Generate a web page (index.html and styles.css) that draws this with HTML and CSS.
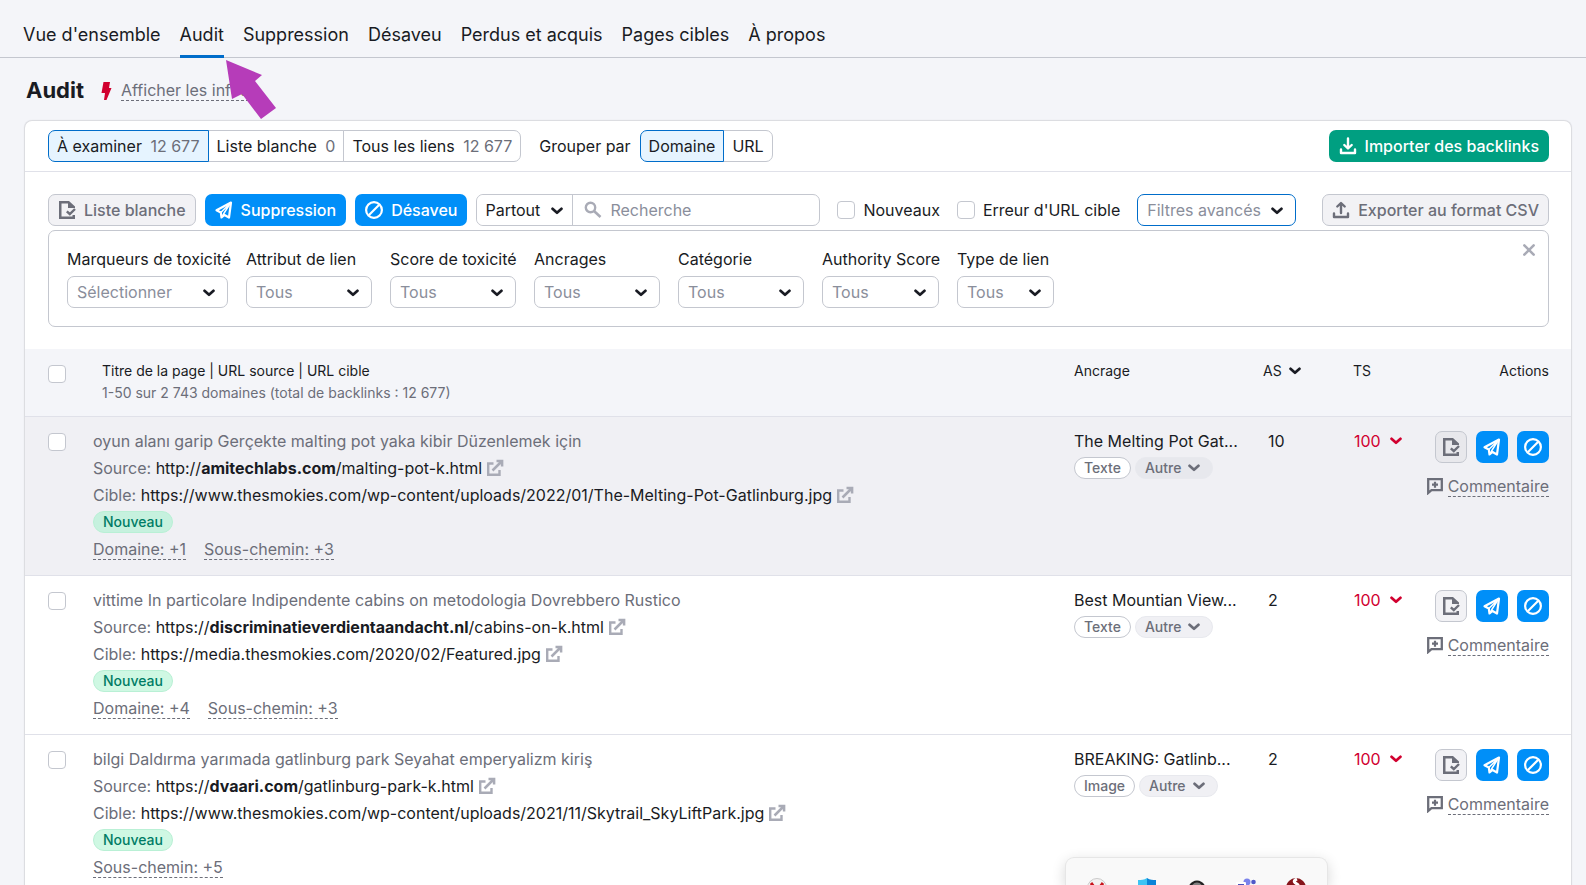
FILE: index.html
```html
<!DOCTYPE html>
<html lang="fr">
<head>
<meta charset="utf-8">
<title>Audit de backlinks</title>
<link rel="stylesheet" href="styles.css">
</head>
<body>
<svg class="sprite" aria-hidden="true">
  <symbol id="i-chevron" viewBox="0 0 12 8"><path d="M1.500 1.800 6 5.800l4.500-4" fill="none" stroke="currentColor" stroke-width="2.700" stroke-linecap="round" stroke-linejoin="round"/></symbol>
  <symbol id="i-page" viewBox="0 0 18 18"><path d="M11 0H1v18h16v-4h-2.500v1.500h-11v-13H10V7h7V5.500z" fill="currentColor"/><path d="m8.800 10.300 3 2.700 5.200-5" fill="none" stroke="currentColor" stroke-width="2.400"/></symbol>
  <symbol id="i-plane" viewBox="0 0 18 18"><path d="M16 1.500 1.500 9.200l4.300 2.300L6.500 16.500l3-2.500 4.500 2.500z" fill="none" stroke="currentColor" stroke-width="2.200" stroke-linejoin="round"/><path d="M15.500 2 5.800 11.500M15.500 2 8.800 12.500l1 1.800M8.800 12.500 6.800 16" fill="none" stroke="currentColor" stroke-width="1.500"/></symbol>
  <symbol id="i-ban" viewBox="0 0 18 18"><circle cx="9" cy="9" r="7.900" fill="none" stroke="currentColor" stroke-width="2.200"/><path d="M4 14 14 4" stroke="currentColor" stroke-width="2.200"/></symbol>
  <symbol id="i-down" viewBox="0 0 18 18"><path d="M2 12.500V16h14v-3.500" fill="none" stroke="currentColor" stroke-width="2.400" stroke-linecap="round" stroke-linejoin="round"/><path d="M9 1.500v9.500M5.300 8 9 11.500 12.700 8" fill="none" stroke="currentColor" stroke-width="2.400" stroke-linecap="round" stroke-linejoin="round"/></symbol>
  <symbol id="i-up" viewBox="0 0 18 18"><path d="M2 12.500V16h14v-3.500" fill="none" stroke="currentColor" stroke-width="2.400" stroke-linecap="round" stroke-linejoin="round"/><path d="M9 12V2.500M5.300 5.500 9 2l3.700 3.500" fill="none" stroke="currentColor" stroke-width="2.400" stroke-linecap="round" stroke-linejoin="round"/></symbol>
  <symbol id="i-search" viewBox="0 0 18 18"><circle cx="6.500" cy="6.500" r="4.700" fill="none" stroke="currentColor" stroke-width="2.400"/><path d="m10 10 6.500 6" stroke="currentColor" stroke-width="2.600"/></symbol>
  <symbol id="i-ext" viewBox="0 0 18 18"><path d="M7.500 4.500H2.200v11.300h11.300V11" fill="none" stroke="currentColor" stroke-width="2.400"/><path d="M10.500 1.900h5.600v5.600M16 2 6.500 11.500" fill="none" stroke="currentColor" stroke-width="2.500"/></symbol>
  <symbol id="i-note" viewBox="0 0 18 18"><path d="M2.200 2.200h13.600v11H5.500L2.200 16z" fill="none" stroke="currentColor" stroke-width="2.300"/><path d="M9 4.700v6M6 7.700h6" stroke="currentColor" stroke-width="2.200"/></symbol>
</svg>

<nav class="tabs">
  <a class="tab" href="#ensemble">Vue d'ensemble</a>
  <a class="tab tab-on" href="#audit">Audit</a>
  <a class="tab" href="#suppression">Suppression</a>
  <a class="tab" href="#desaveu">Désaveu</a>
  <a class="tab" href="#perdus">Perdus et acquis</a>
  <a class="tab" href="#pages">Pages cibles</a>
  <a class="tab" href="#apropos">À propos</a>
</nav>

<header class="title-row">
  <h1 class="title">Audit</h1>
  <svg class="bolt" viewBox="0 0 10 18"><path d="M2 0h6.500L7.500 6H10L5 18H2.500l1-7H0z" fill="currentColor"/></svg>
  <button class="dashed" type="button">Afficher les infos</button>
</header>
<svg class="pointer" viewBox="0 0 52 60" aria-hidden="true"><path d="M0 0 36 15 29 21 50 48 35 59 16 34 6 39z" fill="#b63cb9"/></svg>

<main class="card">
  <div class="bar bar-top">
    <div class="segment">
      <button class="seg seg-on" type="button">À examiner <span class="count">12 677</span></button>
      <button class="seg" type="button">Liste blanche <span class="count">0</span></button>
      <button class="seg" type="button">Tous les liens <span class="count">12 677</span></button>
    </div>
    <span class="group-label">Grouper par</span>
    <div class="segment">
      <button class="seg seg-on" type="button">Domaine</button>
      <button class="seg" type="button">URL</button>
    </div>
    <button class="btn btn-green push" type="button"><svg class="ico"><use href="#i-down"/></svg>Importer des backlinks</button>
  </div>

  <div class="bar bar-tools">
    <button class="btn btn-grey" type="button"><svg class="ico"><use href="#i-page"/></svg>Liste blanche</button>
    <button class="btn btn-blue" type="button"><svg class="ico"><use href="#i-plane"/></svg>Suppression</button>
    <button class="btn btn-blue" type="button"><svg class="ico"><use href="#i-ban"/></svg>Désaveu</button>
    <div class="search">
      <span class="pick pick-scope"><select class="select select-scope" aria-label="Portée"><option>Partout</option></select><svg class="chev"><use href="#i-chevron"/></svg></span>
      <svg class="ico ico-search"><use href="#i-search"/></svg>
      <input class="search-input" type="text" placeholder="Recherche" aria-label="Recherche">
    </div>
    <label class="check-label"><input class="check" type="checkbox">Nouveaux</label>
    <label class="check-label"><input class="check" type="checkbox">Erreur d'URL cible</label>
    <span class="pick pick-adv"><select class="select select-adv" aria-label="Filtres avancés"><option>Filtres avancés</option></select><svg class="chev"><use href="#i-chevron"/></svg></span>
    <button class="btn btn-grey push" type="button"><svg class="ico"><use href="#i-up"/></svg>Exporter au format CSV</button>
  </div>

  <section class="filters">
    <div class="field w-xl"><label for="f1">Marqueurs de toxicité</label><span class="pick"><select class="select" id="f1"><option>Sélectionner</option></select><svg class="chev"><use href="#i-chevron"/></svg></span></div>
    <div class="field w-md"><label for="f2">Attribut de lien</label><span class="pick"><select class="select" id="f2"><option>Tous</option></select><svg class="chev"><use href="#i-chevron"/></svg></span></div>
    <div class="field w-md"><label for="f3">Score de toxicité</label><span class="pick"><select class="select" id="f3"><option>Tous</option></select><svg class="chev"><use href="#i-chevron"/></svg></span></div>
    <div class="field w-md"><label for="f4">Ancrages</label><span class="pick"><select class="select" id="f4"><option>Tous</option></select><svg class="chev"><use href="#i-chevron"/></svg></span></div>
    <div class="field w-md"><label for="f5">Catégorie</label><span class="pick"><select class="select" id="f5"><option>Tous</option></select><svg class="chev"><use href="#i-chevron"/></svg></span></div>
    <div class="field w-sm"><label for="f6">Authority Score</label><span class="pick"><select class="select" id="f6"><option>Tous</option></select><svg class="chev"><use href="#i-chevron"/></svg></span></div>
    <div class="field w-xs"><label for="f7">Type de lien</label><span class="pick"><select class="select" id="f7"><option>Tous</option></select><svg class="chev"><use href="#i-chevron"/></svg></span></div>
    <button class="close" type="button" aria-label="Fermer"><svg class="close-ico" viewBox="0 0 12 12"><path d="m2 2 8 8m0-8-8 8" stroke="currentColor" stroke-width="2.200" stroke-linecap="round"/></svg></button>
  </section>

  <table class="links">
    <colgroup><col class="c-check"><col><col class="c-anchor"><col class="c-as"><col class="c-ts"><col class="c-act"></colgroup>
    <thead>
      <tr>
        <th class="cell-check"><input class="check" type="checkbox" aria-label="Tout sélectionner"></th>
        <th class="th-main">Titre de la page | URL source | URL cible<span class="sub">1-50 sur 2 743 domaines (total de backlinks : 12 677)</span></th>
        <th>Ancrage</th>
        <th><button class="sort" type="button">AS<svg class="chev-in"><use href="#i-chevron"/></svg></button></th>
        <th>TS</th>
        <th class="th-act">Actions</th>
      </tr>
    </thead>
    <tbody>
      <tr class="hovered">
        <td class="cell-check"><input class="check" type="checkbox" aria-label="Sélectionner la ligne 1"></td>
        <td>
          <div class="line muted">oyun alanı garip Gerçekte malting pot yaka kibir Düzenlemek için</div>
          <div class="line muted">Source: <a class="url" href="#s1">http://<b>amitechlabs.com</b>/malting-pot-k.html<svg class="ext"><use href="#i-ext"/></svg></a></div>
          <div class="line muted">Cible: <a class="url" href="#c1">https://www.thesmokies.com/wp-content/uploads/2022/01/The-Melting-Pot-Gatlinburg.jpg<svg class="ext"><use href="#i-ext"/></svg></a></div>
          <div class="line"><span class="badge">Nouveau</span></div>
          <div class="line more"><button class="dashed" type="button">Domaine: +1</button><button class="dashed" type="button">Sous-chemin: +3</button></div>
        </td>
        <td><div class="line anchor">The Melting Pot Gat...</div><div class="line tags"><span class="tag">Texte</span><button class="tag tag-grey" type="button">Autre<svg class="chev-in"><use href="#i-chevron"/></svg></button></div></td>
        <td><div class="line num">10</div></td>
        <td><button class="line ts" type="button">100<svg class="chev-in"><use href="#i-chevron"/></svg></button></td>
        <td><div class="acts"><button class="btn btn-grey sq" type="button" aria-label="Liste blanche"><svg class="ico"><use href="#i-page"/></svg></button><button class="btn btn-blue sq" type="button" aria-label="Suppression"><svg class="ico"><use href="#i-plane"/></svg></button><button class="btn btn-blue sq" type="button" aria-label="Désaveu"><svg class="ico"><use href="#i-ban"/></svg></button></div><div class="comment"><svg class="ico"><use href="#i-note"/></svg><button class="dashed" type="button">Commentaire</button></div></td>
      </tr>
      <tr>
        <td class="cell-check"><input class="check" type="checkbox" aria-label="Sélectionner la ligne 2"></td>
        <td>
          <div class="line muted">vittime In particolare Indipendente cabins on metodologia Dovrebbero Rustico</div>
          <div class="line muted">Source: <a class="url" href="#s2">https://<b>discriminatieverdientaandacht.nl</b>/cabins-on-k.html<svg class="ext"><use href="#i-ext"/></svg></a></div>
          <div class="line muted">Cible: <a class="url" href="#c2">https://media.thesmokies.com/2020/02/Featured.jpg<svg class="ext"><use href="#i-ext"/></svg></a></div>
          <div class="line"><span class="badge">Nouveau</span></div>
          <div class="line more"><button class="dashed" type="button">Domaine: +4</button><button class="dashed" type="button">Sous-chemin: +3</button></div>
        </td>
        <td><div class="line anchor">Best Mountian View...</div><div class="line tags"><span class="tag">Texte</span><button class="tag tag-grey" type="button">Autre<svg class="chev-in"><use href="#i-chevron"/></svg></button></div></td>
        <td><div class="line num">2</div></td>
        <td><button class="line ts" type="button">100<svg class="chev-in"><use href="#i-chevron"/></svg></button></td>
        <td><div class="acts"><button class="btn btn-grey sq" type="button" aria-label="Liste blanche"><svg class="ico"><use href="#i-page"/></svg></button><button class="btn btn-blue sq" type="button" aria-label="Suppression"><svg class="ico"><use href="#i-plane"/></svg></button><button class="btn btn-blue sq" type="button" aria-label="Désaveu"><svg class="ico"><use href="#i-ban"/></svg></button></div><div class="comment"><svg class="ico"><use href="#i-note"/></svg><button class="dashed" type="button">Commentaire</button></div></td>
      </tr>
      <tr>
        <td class="cell-check"><input class="check" type="checkbox" aria-label="Sélectionner la ligne 3"></td>
        <td>
          <div class="line muted">bilgi Daldırma yarımada gatlinburg park Seyahat emperyalizm kiriş</div>
          <div class="line muted">Source: <a class="url" href="#s3">https://<b>dvaari.com</b>/gatlinburg-park-k.html<svg class="ext"><use href="#i-ext"/></svg></a></div>
          <div class="line muted">Cible: <a class="url" href="#c3">https://www.thesmokies.com/wp-content/uploads/2021/11/Skytrail_SkyLiftPark.jpg<svg class="ext"><use href="#i-ext"/></svg></a></div>
          <div class="line"><span class="badge">Nouveau</span></div>
          <div class="line more"><button class="dashed" type="button">Sous-chemin: +5</button></div>
        </td>
        <td><div class="line anchor">BREAKING: Gatlinb...</div><div class="line tags"><span class="tag">Image</span><button class="tag tag-grey" type="button">Autre<svg class="chev-in"><use href="#i-chevron"/></svg></button></div></td>
        <td><div class="line num">2</div></td>
        <td><button class="line ts" type="button">100<svg class="chev-in"><use href="#i-chevron"/></svg></button></td>
        <td><div class="acts"><button class="btn btn-grey sq" type="button" aria-label="Liste blanche"><svg class="ico"><use href="#i-page"/></svg></button><button class="btn btn-blue sq" type="button" aria-label="Suppression"><svg class="ico"><use href="#i-plane"/></svg></button><button class="btn btn-blue sq" type="button" aria-label="Désaveu"><svg class="ico"><use href="#i-ban"/></svg></button></div><div class="comment"><svg class="ico"><use href="#i-note"/></svg><button class="dashed" type="button">Commentaire</button></div></td>
      </tr>
    </tbody>
  </table>
</main>

<aside class="tray" aria-label="Icônes masquées">
  <svg class="tray-ico" viewBox="0 0 20 20"><circle cx="10" cy="10" r="9.500" fill="#f4f2f2" stroke="#c9c9c9"/><path d="m4 5 3 4m9-4-3 4" stroke="#c8141c" stroke-width="3"/></svg>
  <svg class="tray-ico" viewBox="0 0 20 20"><path d="M10 0c3 2 6 2 9 2v9c0 5-5 8-9 9z" fill="#0a84d8"/><path d="M10 0C7 2 4 2 1 2v9c0 5 5 8 9 9z" fill="#3cc4f4"/></svg>
  <svg class="tray-ico" viewBox="0 0 20 20"><path d="M1 10C4 0 16 0 19 10v5H1z" fill="#222"/><path d="M4 9c3-6 9-6 12 0z" fill="#808080"/></svg>
  <svg class="tray-ico" viewBox="0 0 20 20"><circle cx="11" cy="4" r="3.500" fill="#7b83eb"/><circle cx="17.500" cy="4" r="2.300" fill="#5059c9"/><rect x="7" y="8" width="12" height="10" rx="2" fill="#7b83eb"/><rect x="0" y="4" width="10" height="11" rx="1" fill="#fff"/><path d="M2 6h6v2H2z" fill="#4b53bc"/></svg>
  <svg class="tray-ico" viewBox="0 0 20 20"><circle cx="10" cy="10" r="10" fill="#86151b"/><path d="M11 1c-5 2-2 4 0 5s1 3-2 4" fill="none" stroke="#fff" stroke-width="3"/></svg>
</aside>
</body>
</html>
```
FILE: styles.css
```css
:root {
  --text: #191b23;
  --muted: #6c6e79;
  --line: #c4c7cf;
  --soft: #e0e1e9;
  --blue: #008ff8;
  --active: #006dca;
}

* { box-sizing: border-box; }

body {
  margin: 0;
  background: #f4f5f9;
  color: var(--text);
  font: 16px/24px Inter, "Liberation Sans", sans-serif;
}

button, input, select { font: inherit; color: inherit; margin: 0; }
button { padding: 0; border: 0; background: none; white-space: nowrap; }
a { color: inherit; text-decoration: none; }
.sprite { display: none; }

.tabs {
  display: flex;
  gap: 19px;
  padding: 12px 23px 0;
  border-bottom: 1px solid var(--line);
  font-size: 18px;
}
.tab {
  padding: 11px 0 8px;
  margin-bottom: -1px;
  border-bottom: 3px solid transparent;
}
.tab-on { border-color: var(--active); }

.title-row {
  display: flex;
  align-items: center;
  padding: 19px 26px 17px;
}
.title { margin: 0 17px 0 0; font-size: 22px; line-height: 27px; font-weight: 700; }
.bolt { width: 11px; height: 18px; margin-right: 9px; color: #d1002f; }
.dashed {
  color: var(--muted);
  line-height: 20px;
  border-bottom: 1px dashed var(--muted);
}
.pointer {
  position: absolute;
  left: 226px;
  top: 60px;
  width: 52px;
  height: 60px;
}

.card {
  margin: 0 15px 0 25px;
  background: #fff;
  border-radius: 7px 7px 0 0;
  box-shadow: 0 0 1px 1px rgba(25, 27, 35, 0.12);
}
.bar { display: flex; align-items: center; padding: 0 22px 0 23px; }
.bar-top { height: 51px; border-bottom: 1px solid var(--soft); }
.bar-tools { gap: 9px; padding-top: 22px; }
.push { margin-left: auto; }

.segment { display: flex; }
.seg {
  height: 32px;
  margin-left: -1px;
  padding: 0 8px 1px;
  border: 1px solid var(--line);
  background: #fff;
}
.seg:first-child { margin-left: 0; border-radius: 7px 0 0 7px; }
.seg:last-child { border-radius: 0 7px 7px 0; }
.seg-on { position: relative; border-color: var(--active); background: #e6f4ff; }
.count { margin-left: 4px; color: var(--muted); }
.group-label { margin: 0 9px 0 18px; }

.btn {
  display: flex;
  align-items: center;
  gap: 8px;
  height: 32px;
  padding: 0 9px;
  border: 1px solid transparent;
  border-radius: 7px;
  font-weight: 500;
}
.btn-green { background: #009f81; color: #fff; }
.btn-blue { background: var(--blue); color: #fff; }
.btn-grey { border-color: var(--line); background: #f2f2f5; color: var(--muted); }
.ico { flex: none; width: 18px; height: 18px; }

.search {
  display: flex;
  align-items: center;
  width: 344px;
  height: 32px;
  border: 1px solid var(--line);
  border-radius: 7px;
}
.pick { display: block; position: relative; }
.chev {
  position: absolute;
  right: 13px;
  top: 13px;
  width: 12px;
  height: 8px;
  color: var(--text);
  pointer-events: none;
}
.select {
  display: block;
  width: 100%;
  height: 32px;
  padding: 0 9px 1px;
  border: 1px solid var(--line);
  border-radius: 7px;
  background: #fff;
  color: #8a8e9b;
  appearance: none;
}
.pick-scope { flex: none; width: 96px; border-right: 1px solid var(--line); }
.pick-scope .chev { right: 9px; top: 12px; }
.select-scope { height: 30px; padding: 0 8px; border: 0; color: var(--text); }
.pick-adv { width: 159px; margin-left: 8px; }
.select-adv { border-color: var(--active); }
.ico-search { margin: 0 8px 0 11px; color: #a9abb6; }
.search-input {
  flex: 1;
  min-width: 0;
  height: 30px;
  padding: 0;
  border: 0;
  outline: 0;
  background: none;
}
.search-input::placeholder { color: #8a8e9b; opacity: 1; }
.check {
  flex: none;
  appearance: none;
  display: block;
  width: 18px;
  height: 18px;
  border: 1px solid var(--line);
  border-radius: 4px;
  background: #fff;
}
.check-label { display: flex; align-items: center; gap: 8px; margin-left: 8px; white-space: nowrap; }

.filters {
  position: relative;
  display: flex;
  gap: 18px;
  margin: 4px 22px 22px 23px;
  padding: 16px 18px 18px;
  border: 1px solid var(--line);
  border-radius: 7px;
}
.field label { display: block; margin-bottom: 5px; white-space: nowrap; }
.w-xl { width: 161px; }
.w-md { width: 126px; }
.w-sm { width: 117px; }
.w-xs { width: 97px; }
.close { position: absolute; right: 12px; top: 12px; color: #a9abb6; }
.close-ico { display: block; width: 14px; height: 14px; }

.links { width: 100%; border-collapse: collapse; table-layout: fixed; }
.c-check { width: 68px; }
.c-anchor { width: 189px; }
.c-as { width: 90px; }
.c-ts { width: 73px; }
.c-act { width: 145px; }
th {
  height: 67px;
  padding: 11px 0;
  background: #f4f5f9;
  border-bottom: 1px solid var(--soft);
  font-size: 14px;
  line-height: 22px;
  font-weight: 400;
  text-align: left;
  vertical-align: top;
}
td { padding: 11px 0 12px; border-bottom: 1px solid var(--soft); vertical-align: top; }
.hovered { background: #f0f0f4; }
.cell-check { padding: 16px 0 0 23px; }
.th-main { padding-left: 9px; }
.sub { display: block; color: var(--muted); }
.th-act { padding-right: 22px; text-align: right; }
.sort { display: flex; align-items: center; gap: 7px; }
.chev-in { flex: none; width: 12px; height: 8px; }

.line { display: flex; align-items: center; height: 27px; white-space: pre; }
.muted { color: var(--muted); }
.url { display: flex; align-items: center; color: var(--text); }
.url b { font-weight: 700; }
.ext { width: 18px; height: 18px; margin-left: 4px; color: #a9abb6; }
.badge, .tag {
  display: flex;
  align-items: center;
  height: 22px;
  padding: 0 9px 1px;
  border: 1px solid var(--line);
  border-radius: 11px;
  font-size: 14px;
  line-height: 20px;
  font-weight: 500;
}
.badge { background: #cff8e3; border-color: #b9f0d5; color: #007c65; }
.hovered .badge { background: #c6f1de; }
.more { gap: 18px; }
.tags { gap: 4px; }
.tag { background: #fff; color: var(--muted); }
.tag-grey { gap: 7px; padding-right: 12px; background: #f0f0f4; border-color: #e8e9ee; }
.hovered .tag-grey { background: #e7e8ed; }
.num { padding-left: 5px; }
.ts { gap: 9px; padding-left: 1px; color: #d1002f; }
.acts { display: flex; justify-content: flex-end; gap: 9px; padding: 3px 22px 0 0; }
.sq { justify-content: center; width: 32px; padding: 0; }
.hovered .btn-grey { background: #e8e8ec; }
.comment {
  display: flex;
  align-items: center;
  justify-content: flex-end;
  gap: 4px;
  margin: 13px 22px 0 0;
  color: var(--muted);
}

.tray {
  position: fixed;
  left: 1065px;
  bottom: 0;
  display: flex;
  justify-content: space-between;
  width: 263px;
  height: 28px;
  padding: 20px 21px 0;
  overflow: hidden;
  border: 1px solid #e6e6e6;
  border-bottom: 0;
  border-radius: 9px 9px 0 0;
  background: #f9f9f9;
  box-shadow: 0 4px 14px rgba(0, 0, 0, 0.16);
}
.tray-ico { flex: none; width: 20px; height: 20px; }
```
